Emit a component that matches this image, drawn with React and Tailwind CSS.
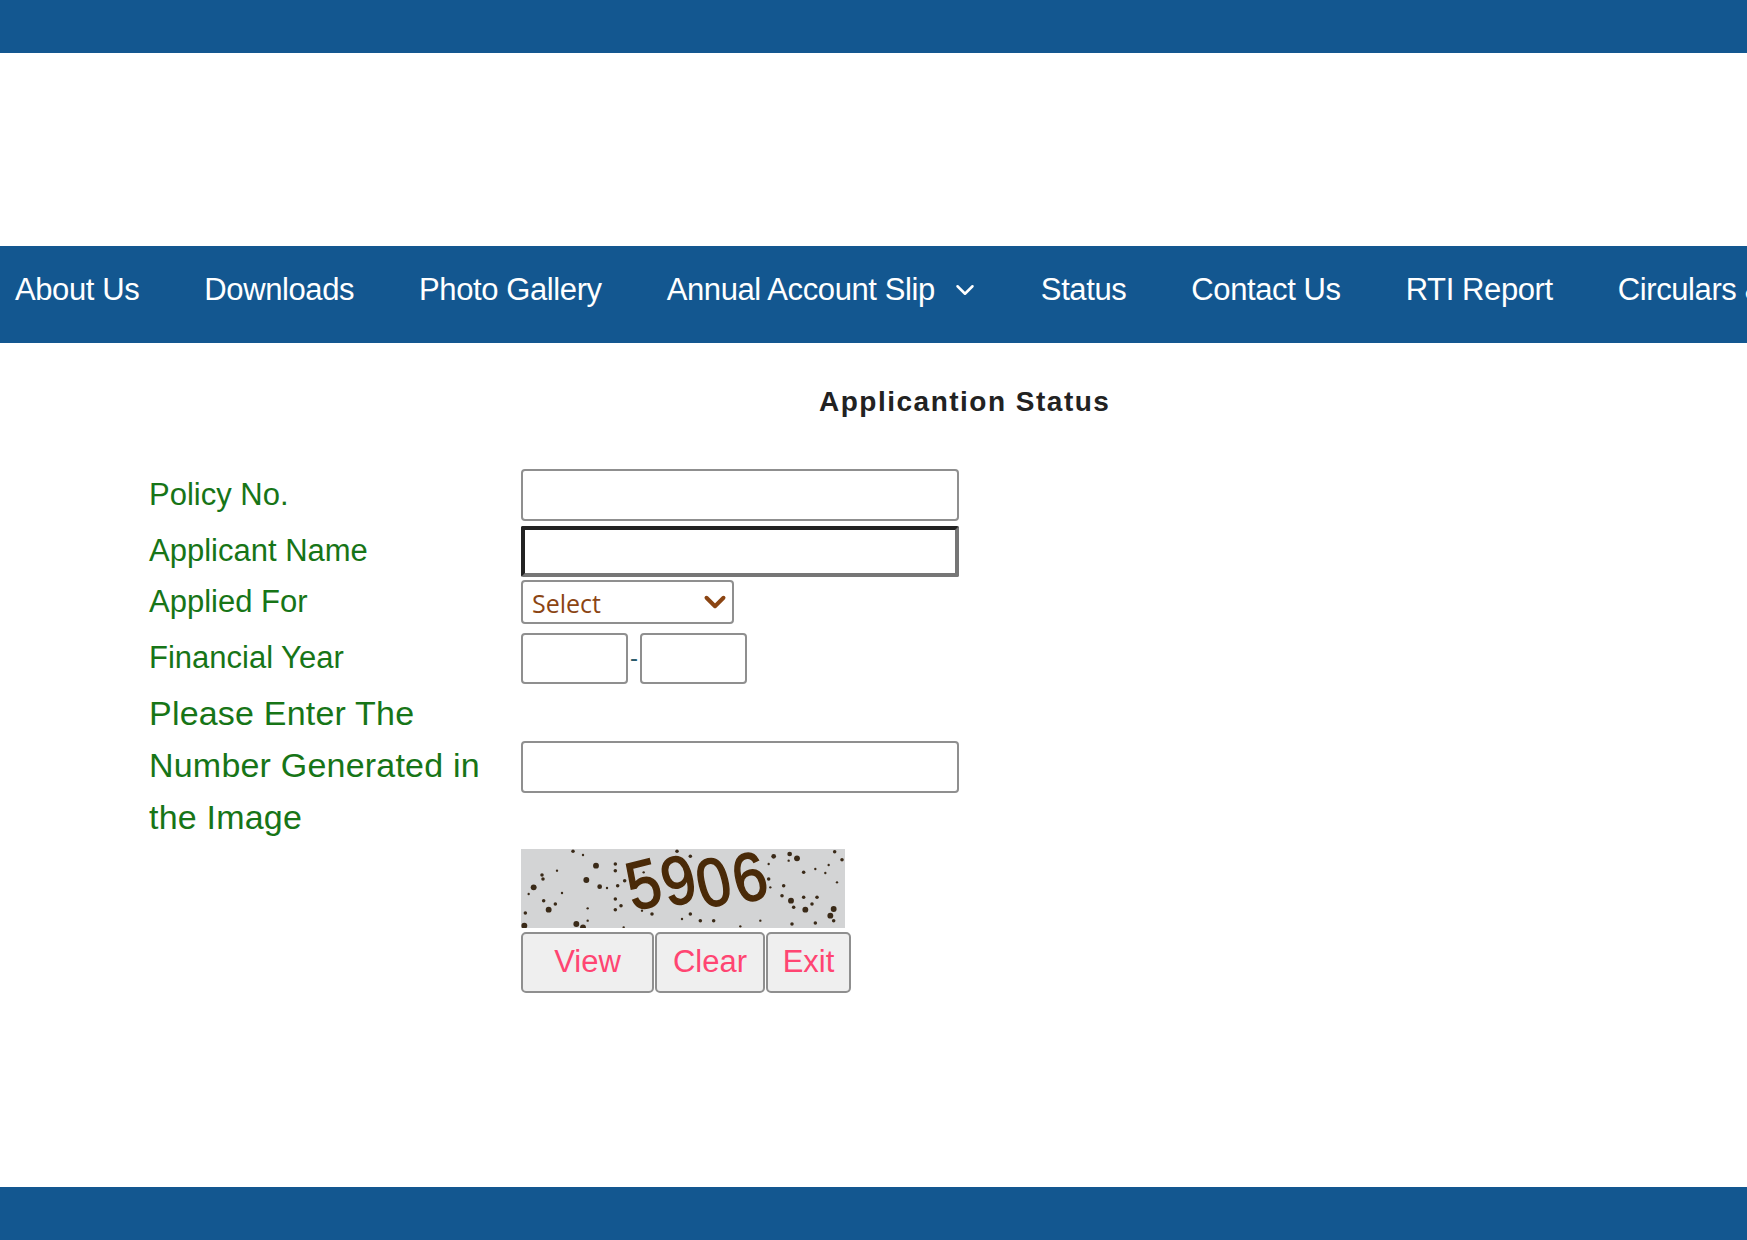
import { ChevronDown } from 'lucide-react';

const navItems = ['About Us', 'Downloads', 'Photo Gallery', 'Annual Account Slip', 'Status', 'Contact Us', 'RTI Report', 'Circulars & Orders'];

const dots = [
  [218,47,3],[248,58,2],[287,90,5],[345,85,3],[345,105,3],[125,118,3],[128,130,3],[170,105,2],[100,155,5],[258,133,5],
  [298,153,4],[320,157,2],[352,150,3],[373,135,3],[185,172,2],[130,195,3],[165,205,3],[145,222,5],[85,175,2],[75,232,3],
  [72,270,5],[228,265,5],[248,275,5],[262,255,2],[345,190,3],[362,210,3],[345,222,3],[262,218,2],[530,47,3],[570,62,3],
  [820,62,4],[868,55,4],[890,68,5],[865,75,2],[1003,48,3],[1025,72,3],[805,85,2],[985,88,2],[910,110,3],[945,100,2],
  [975,112,2],[805,130,3],[850,150,3],[810,155,2],[845,180,3],[872,195,5],[880,215,3],[910,185,3],[950,185,3],[935,205,3],
  [915,222,5],[1000,220,5],[990,240,5],[945,262,3],[875,265,3],[780,255,2],[720,272,2],[640,255,3],[600,255,3],[570,235,3],
  [545,250,2],[455,235,3],[425,225,2],[370,275,2],[1010,140,2],[1000,255,3],[430,110,2],
];

const digits = [['5', 112, 62], ['9', 147, 58], ['0', 182, 60], ['6', 218, 55]];

const inputCls = 'block w-[438px] h-[52px] bg-white border-2 border-[#8f8f8f] rounded-[4px]';
const labelCls = 'w-[372px] shrink-0 text-[31px] leading-[52px] text-[#177517]';

const Captcha = () => (
  <svg width="324" height="79" viewBox="0 0 324 79" className="block blur-[0.7px]">
    <rect width="324" height="79" fill="#d3d4d5" />
    {dots.map(([x, y, r], i) => (
      <circle key={i} cx={(x - 62) / 3} cy={(y - 40) / 3} r={r / 1.7} fill="#3a2a18" />
    ))}
    {digits.map(([d, x, y]) => (
      <text key={d} transform={`translate(${x} ${y}) rotate(-14) scale(0.88 1)`} fontFamily="'Liberation Sans', sans-serif" fontSize="68" fill="#4a2a08" stroke="#4a2a08" strokeWidth="1.6">{d}</text>
    ))}
  </svg>
);

const Btn = ({ w, children }) => (
  <button className={`${w} h-[61px] bg-[#efefef] border-2 border-[#8f8f8f] rounded-[5px] text-[31px] text-[#ff4572]`}>{children}</button>
);

export default function App() {
  return (
    <div className="h-[1240px] flex flex-col bg-white overflow-hidden font-['Liberation_Sans',Arial,sans-serif]">
      <div className="h-[53px] bg-[#135790] shrink-0"></div>

      <nav className="mt-[193px] h-[97px] bg-[#135790] shrink-0 flex gap-[65px] pl-[15px] pt-[26px] text-[31px] leading-[36px] text-white whitespace-nowrap tracking-[-0.4px] overflow-hidden">
        {navItems.map((item) => (
          <span key={item} className="flex items-start shrink-0">
            {item}
            {item === 'Annual Account Slip' && <ChevronDown className="w-[30px] h-[30px] mt-[3px] ml-[15px] -mr-[4px]" strokeWidth={2} />}
          </span>
        ))}
      </nav>

      <main className="flex-1 pl-[149px]">
        <h2 className="mt-[42px] ml-[670px] text-[28px] leading-[34px] font-bold text-[#222] tracking-[1.5px] whitespace-nowrap">Applicantion Status</h2>

        <div className="mt-[50px] flex items-center">
          <label className={labelCls}>Policy No.</label>
          <input className={inputCls} />
        </div>
        <div className="mt-[4px] flex items-center">
          <label className={labelCls}>Applicant Name</label>
          <input className="block w-[438px] h-[51px] bg-white border-[4px] border-t-[#222] border-l-[#222] border-r-[#767676] border-b-[#767676] rounded-[2px]" />
        </div>
        <div className="mt-[3px] flex items-center">
          <label className="w-[372px] shrink-0 text-[31px] leading-[44px] text-[#177517]">Applied For</label>
          <div className="relative w-[213px] h-[44px]">
            <select className="appearance-none w-full h-full pl-[9px] pt-[3px] bg-white border-2 border-[#8f8f8f] rounded-[4px] text-[25px] text-[#8b4513] font-['Open_Sans',sans-serif]">
              <option>Select</option>
            </select>
            <ChevronDown className="absolute top-[5px] right-[2px] w-[34px] h-[34px] text-[#8b4513] pointer-events-none" strokeWidth={2.8} />
          </div>
        </div>
        <div className="mt-[8px] flex items-center">
          <label className={labelCls}>Financial Year</label>
          <input className="block w-[107px] h-[51px] bg-white border-2 border-[#8f8f8f] rounded-[4px]" />
          <span className="w-[12px] text-center text-[24px] text-[#2a5a6a]">-</span>
          <input className="block w-[107px] h-[51px] bg-white border-2 border-[#8f8f8f] rounded-[4px]" />
        </div>
        <div className="mt-[3px] flex items-start">
          <label className="w-[372px] shrink-0 text-[34px] leading-[52px] text-[#177517] tracking-[0.2px]">
            Please Enter The<br />Number Generated in<br />the Image
          </label>
          <input className={`${inputCls} mt-[54px]`} />
        </div>
        <div className="mt-[6px] ml-[372px]">
          <Captcha />
          <div className="mt-[4px] flex gap-[1px]">
            <Btn w="w-[133px]">View</Btn>
            <Btn w="w-[110px]">Clear</Btn>
            <Btn w="w-[85px]">Exit</Btn>
          </div>
        </div>
      </main>

      <div className="h-[53px] bg-[#135790] shrink-0"></div>
    </div>
  );
}
